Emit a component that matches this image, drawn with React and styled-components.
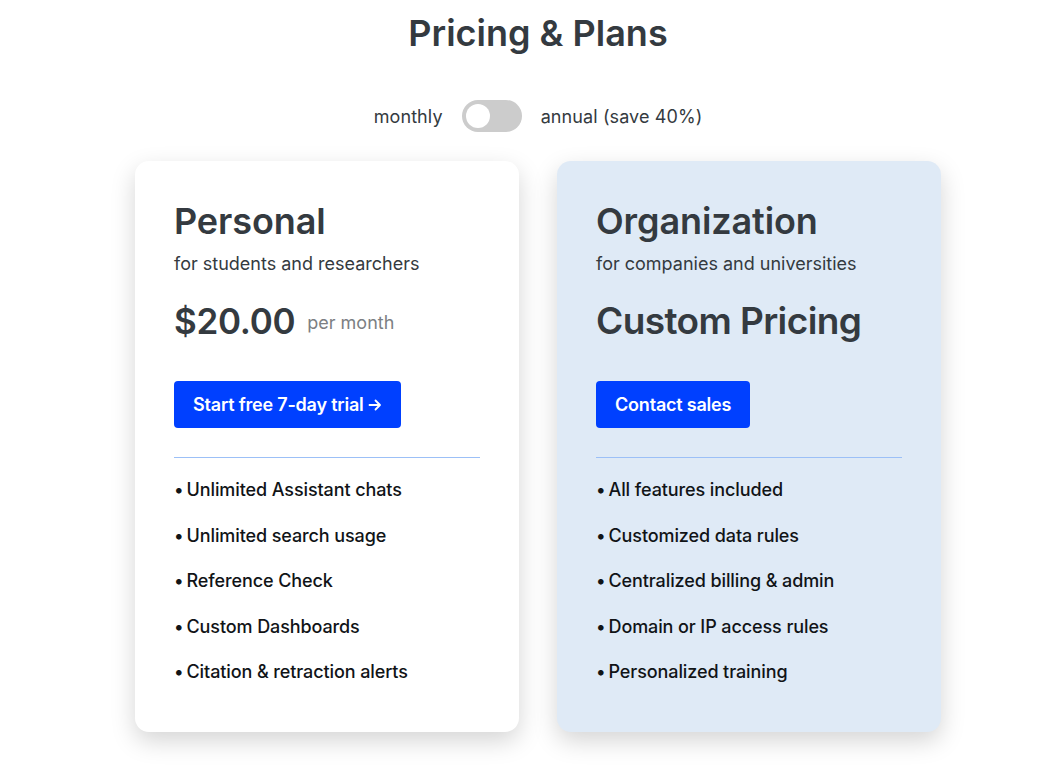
import React, { useState } from "react";
import styled, { createGlobalStyle } from "styled-components";

// *************************************
// Pricing & Plans page
// *************************************

const GlobalStyle = createGlobalStyle`
  html, body {
    margin: 0;
    padding: 0;
    background: #ffffff;
  }

  body {
    font-family: Inter, "Noto Sans", "Liberation Sans", sans-serif;
    color: #343a40;
  }
`;

const Page = styled.main`
  display: flex;
  flex-direction: column;
  align-items: center;
  padding-top: 11px;
  padding-left: 26px; // page is centred slightly right of the window
`;

const Title = styled.h1`
  margin: 0;
  font-size: 36px;
  line-height: 44px;
  font-weight: 600;
  letter-spacing: 0;
  color: #343a40;
`;

const ToggleRow = styled.div`
  display: flex;
  align-items: center;
  gap: 19px;
  margin-top: 45px;
  font-size: 18px;
  letter-spacing: 0.1px;
  color: #343a40;
`;

const Switch = styled.button`
  position: relative;
  width: 60px;
  height: 32px;
  border: none;
  border-radius: 16px;
  padding: 0;
  cursor: pointer;
  background: ${({ $on }) => ($on ? "#0040ff" : "#cccccc")};

  &::after {
    content: "";
    position: absolute;
    top: 4px;
    left: ${({ $on }) => ($on ? "32px" : "4px")};
    width: 24px;
    height: 24px;
    border-radius: 50%;
    background: #ffffff;
    transition: left 0.2s;
  }
`;

const Cards = styled.div`
  display: flex;
  gap: 38px;
  margin-top: 29px;
  padding-bottom: 40px;
`;

const Card = styled.section`
  width: 384px;
  height: 571px;
  box-sizing: border-box;
  padding: 40px 39px;
  border-radius: 14px;
  background: ${({ $tinted }) => ($tinted ? "#dfeaf6" : "#ffffff")};
  box-shadow: 0 9px 24px rgba(0, 0, 0, 0.17);
  display: flex;
  flex-direction: column;
`;

const PlanName = styled.h2`
  margin: 0;
  font-size: 36px;
  line-height: 40px;
  font-weight: 600;
  letter-spacing: -0.1px;
  color: #343a40;
`;

const PlanFor = styled.p`
  margin: 11px 0 0;
  font-size: 18px;
  line-height: 24px;
  color: #343a40;
`;

const PriceRow = styled.div`
  display: flex;
  align-items: flex-end;
  gap: 12px;
  margin-top: 21px;
  height: 48px;
`;

const Price = styled.span`
  font-size: ${({ $big }) => ($big ? "37px" : "35px")};
  line-height: 48px;
  font-weight: 600;
  letter-spacing: ${({ $big }) => ($big ? "-0.6px" : "-0.3px")};
  color: #343a40;
`;

const Per = styled.span`
  font-size: 18px;
  line-height: 24px;
  margin-bottom: 10px;
  color: #7c7f83;
`;

const Cta = styled.a`
  align-self: flex-start;
  display: inline-flex;
  align-items: center;
  gap: 4px;
  margin-top: 36px;
  height: 47px;
  padding: 0 19px;
  border-radius: 4px;
  background: #0040ff;
  color: #ffffff;
  font-size: 18px;
  font-weight: 600;
  letter-spacing: -0.2px;
  text-decoration: none;
  cursor: pointer;
`;

const Divider = styled.div`
  margin-top: 29px;
  height: 1px;
  background: #9cc0f7;
`;

const Features = styled.ul`
  list-style: none;
  margin: 20px 0 0;
  padding: 0;
  display: flex;
  flex-direction: column;
  gap: 21.5px;
`;

const Feature = styled.li`
  font-size: 18px;
  line-height: 24px;
  font-weight: 500;
  letter-spacing: -0.1px;
  color: #111417;

  &::before {
    content: "•";
    margin-right: 3px;
  }
`;

const plans = [
  {
    name: "Personal",
    audience: "for students and researchers",
    price: "$20.00",
    per: "per month",
    cta: "Start free 7-day trial",
    arrow: true,
    features: [
      "Unlimited Assistant chats",
      "Unlimited search usage",
      "Reference Check",
      "Custom Dashboards",
      "Citation & retraction alerts",
    ],
  },
  {
    name: "Organization",
    audience: "for companies and universities",
    price: "Custom Pricing",
    tinted: true,
    cta: "Contact sales",
    features: [
      "All features included",
      "Customized data rules",
      "Centralized billing & admin",
      "Domain or IP access rules",
      "Personalized training",
    ],
  },
];

function Arrow() {
  return (
    <svg width="14" height="14" viewBox="0 0 14 14" fill="none">
      <path
        d="M1.5 7h10M7.5 2.5L12 7l-4.5 4.5"
        stroke="#ffffff"
        strokeWidth="1.8"
        strokeLinecap="round"
        strokeLinejoin="round"
      />
    </svg>
  );
}

export default function App() {
  const [annual, setAnnual] = useState(false);

  return (
    <>
      <GlobalStyle />
      <Page>
        <Title>Pricing &amp; Plans</Title>

        <ToggleRow>
          <span>monthly</span>
          <Switch $on={annual} onClick={() => setAnnual(!annual)} aria-label="billing period" />
          <span>annual (save 40%)</span>
        </ToggleRow>

        <Cards>
          {plans.map((plan) => (
            <Card key={plan.name} $tinted={plan.tinted}>
              <PlanName>{plan.name}</PlanName>
              <PlanFor>{plan.audience}</PlanFor>

              <PriceRow>
                <Price $big={!plan.per}>{plan.price}</Price>
                {plan.per && <Per>{plan.per}</Per>}
              </PriceRow>

              <Cta>
                {plan.cta}
                {plan.arrow && <Arrow />}
              </Cta>

              <Divider />

              <Features>
                {plan.features.map((f) => (
                  <Feature key={f}>{f}</Feature>
                ))}
              </Features>
            </Card>
          ))}
        </Cards>
      </Page>
    </>
  );
}
